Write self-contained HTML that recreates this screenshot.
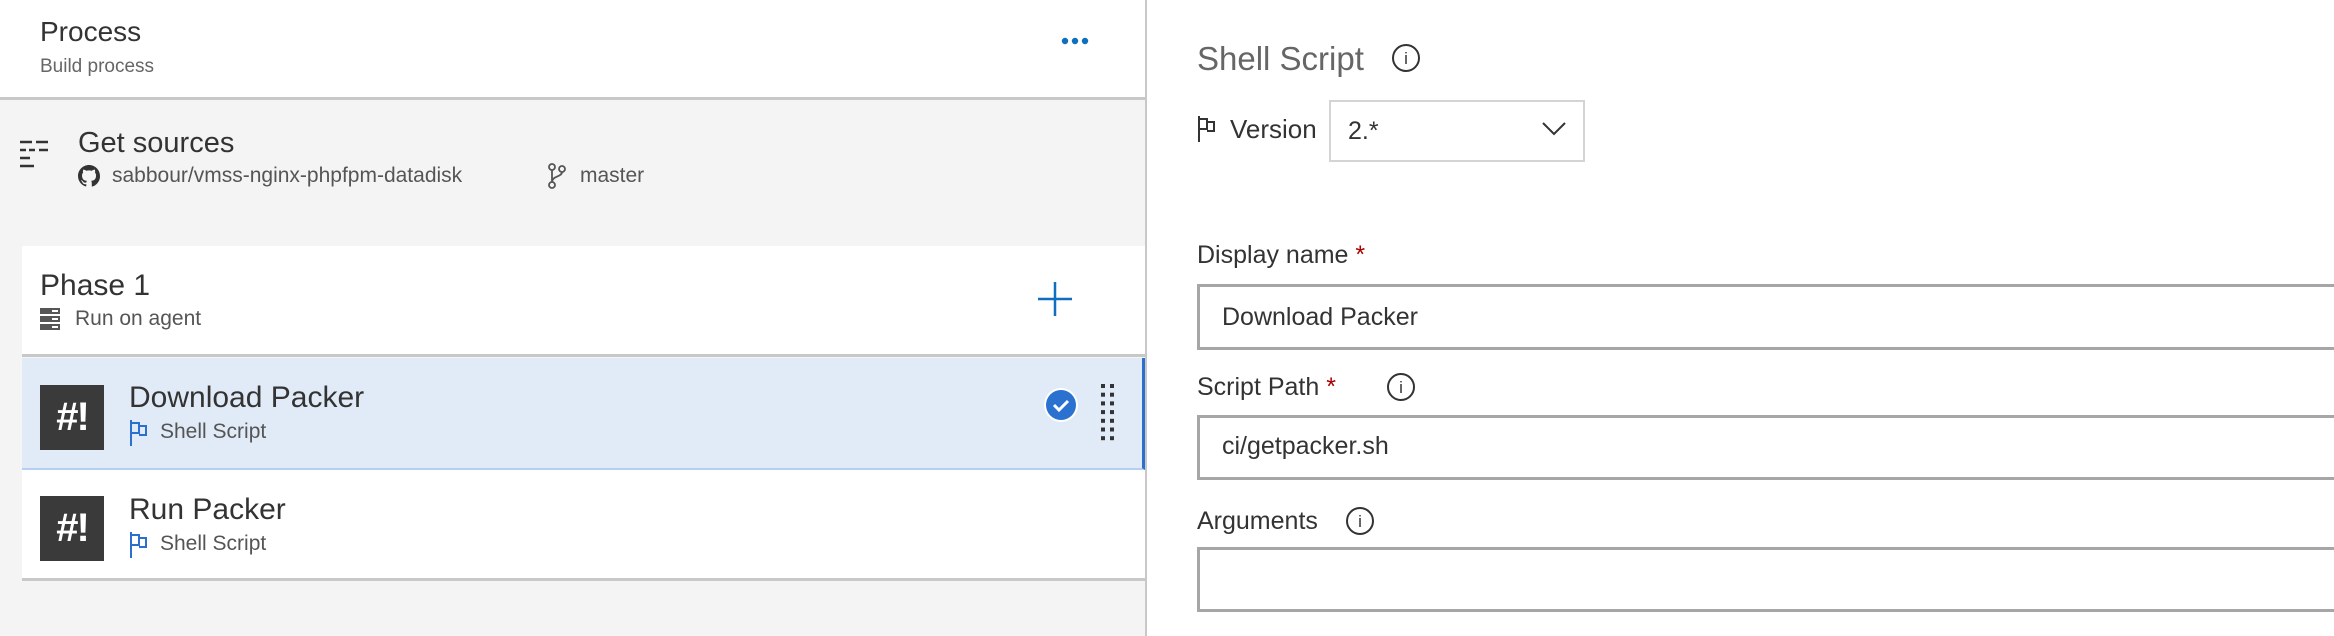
<!DOCTYPE html>
<html><head><meta charset="utf-8"><style>
*{margin:0;padding:0;box-sizing:border-box}
body{width:2334px;height:636px;overflow:hidden;font-family:"Liberation Sans",sans-serif;background:#fff;position:relative;color:#333}
.a{position:absolute;white-space:nowrap}
.left{position:absolute;left:0;top:0;width:1145px;height:636px;background:#f4f4f4}
.hdr{position:absolute;left:0;top:0;width:1145px;height:100px;background:#fff;border-bottom:3px solid #c8c8c8}
.div{position:absolute;left:1145px;top:0;width:2px;height:636px;background:#c8c8c8}
.sh{position:absolute;width:64px;height:65px;background:#3a3a3a;color:#fff;font:bold 40px "Liberation Sans",sans-serif;text-align:center;line-height:65px;letter-spacing:-2px}
.inp{position:absolute;left:1197px;width:1150px;border:3px solid #a6a6a6;background:#fff}
.lbl{font-size:25px;color:#333}
.req{color:#a80000}
.info{position:absolute;width:28px;height:28px;border:2px solid #333;border-radius:50%;font:17px "Liberation Sans",sans-serif;text-align:center;line-height:25px;color:#333}
</style></head><body>
<div class="left"></div>
<div class="hdr"></div>
<div class="div"></div>
<div class="a" style="left:40px;top:16px;font-size:28px">Process</div>
<div class="a" style="left:40px;top:56px;font-size:19px;color:#666">Build process</div>
<svg class="a" style="left:1061px;top:36px" width="30" height="10"><circle cx="4" cy="5" r="3.2" fill="#106ebe"/><circle cx="14" cy="5" r="3.2" fill="#106ebe"/><circle cx="24" cy="5" r="3.2" fill="#106ebe"/></svg>

<svg class="a" style="left:19px;top:138px" width="32" height="30" stroke="#333" stroke-width="2.5"><path d="M1 4h12M17 4h12M1 12h6M10 12h6M20 12h9M1 20h10M1 28h14"/></svg>
<div class="a" style="left:78px;top:127px;font-size:29px">Get sources</div>
<svg class="a" style="left:78px;top:165px" width="22" height="22" viewBox="0 0 16 16"><path fill="#333" d="M8 0C3.58 0 0 3.58 0 8c0 3.54 2.29 6.53 5.47 7.59.4.07.55-.17.55-.38v-1.33c-2.23.48-2.7-1.07-2.7-1.07-.36-.92-.89-1.17-.89-1.17-.73-.5.06-.49.06-.49.8.06 1.23.83 1.23.83.72 1.23 1.88.87 2.34.67.07-.52.28-.87.51-1.07-1.78-.2-3.64-.89-3.64-3.95 0-.87.31-1.59.82-2.15-.08-.2-.36-1.02.08-2.12 0 0 .67-.21 2.2.82a7.6 7.6 0 0 1 4 0c1.53-1.04 2.2-.82 2.2-.82.44 1.1.16 1.92.08 2.12.51.56.82 1.27.82 2.15 0 3.07-1.87 3.75-3.65 3.95.29.25.54.73.54 1.48v2.2c0 .21.15.46.55.38A8 8 0 0 0 16 8c0-4.42-3.58-8-8-8z"/></svg>
<div class="a" style="left:112px;top:164px;font-size:21px;color:#555">sabbour/vmss-nginx-phpfpm-datadisk</div>
<svg class="a" style="left:547px;top:163px" width="20" height="26" stroke="#555" stroke-width="1.8" fill="none"><circle cx="5" cy="4" r="3"/><circle cx="5" cy="22" r="3"/><circle cx="15" cy="6" r="3"/><path d="M5 7v12M15 9c0 5-10 4-10 10"/></svg>
<div class="a" style="left:580px;top:164px;font-size:21px;color:#555">master</div>

<div class="a" style="left:22px;top:246px;width:1123px;height:111px;background:#fff;border-bottom:3px solid #c8c8c8"></div>
<div class="a" style="left:40px;top:269px;font-size:30px">Phase 1</div>
<svg class="a" style="left:40px;top:308px" width="20" height="22"><rect x="0" y="0" width="20" height="6" fill="#555"/><rect x="0" y="8" width="20" height="6" fill="#555"/><rect x="0" y="16" width="20" height="6" fill="#555"/><rect x="12" y="2" width="6" height="2" fill="#fff"/><rect x="12" y="10" width="6" height="2" fill="#fff"/><rect x="12" y="18" width="6" height="2" fill="#fff"/></svg>
<div class="a" style="left:75px;top:307px;font-size:21px;color:#555">Run on agent</div>
<svg class="a" style="left:1038px;top:282px" width="34" height="34" stroke="#106ebe" stroke-width="2.5"><path d="M17 0v34M0 17h34"/></svg>

<div class="a" style="left:22px;top:358px;width:1123px;height:112px;background:#e1ebf7;border-bottom:2px solid #b5cfee;border-right:3px solid #2b6fcf"></div>
<div class="sh" style="left:40px;top:385px">#!</div>
<div class="a" style="left:129px;top:381px;font-size:30px">Download Packer</div>
<svg class="a" style="left:129px;top:420px" width="20" height="26" stroke="#2b6fcf" stroke-width="2" fill="none"><path d="M2 0v26M2 3h8v10H2M10 6h7v9h-7"/></svg>
<div class="a" style="left:160px;top:420px;font-size:21px;color:#555">Shell Script</div>
<svg class="a" style="left:1043px;top:387px" width="36" height="36"><circle cx="18" cy="18" r="17" fill="#fff"/><circle cx="18" cy="18" r="15" fill="#2b72d0"/><path d="M11 18l5 5 9-9" stroke="#fff" stroke-width="3" fill="none"/></svg>
<svg class="a" style="left:1101px;top:384px" width="14" height="58" fill="#333"><g id="r"><rect x="0" y="0" width="4" height="4"/><rect x="9" y="0" width="4" height="4"/></g><use href="#r" y="8.7"/><use href="#r" y="17.4"/><use href="#r" y="26.1"/><use href="#r" y="34.8"/><use href="#r" y="43.5"/><use href="#r" y="52.2"/></svg>

<div class="a" style="left:22px;top:470px;width:1123px;height:111px;background:#fff;border-bottom:3px solid #c8c8c8"></div>
<div class="sh" style="left:40px;top:496px">#!</div>
<div class="a" style="left:129px;top:493px;font-size:30px">Run Packer</div>
<svg class="a" style="left:129px;top:532px" width="20" height="26" stroke="#2b6fcf" stroke-width="2" fill="none"><path d="M2 0v26M2 3h8v10H2M10 6h7v9h-7"/></svg>
<div class="a" style="left:160px;top:532px;font-size:21px;color:#555">Shell Script</div>

<div class="a" style="left:1197px;top:40px;font-size:33px;color:#666">Shell Script</div>
<div class="info" style="left:1392px;top:44px">i</div>
<svg class="a" style="left:1197px;top:116px" width="20" height="26" stroke="#333" stroke-width="2" fill="none"><path d="M2 0v26M2 3h8v10H2M10 6h7v9h-7"/></svg>
<div class="a lbl" style="left:1230px;top:114px;font-size:26px">Version</div>
<div class="a" style="left:1329px;top:100px;width:256px;height:62px;border:2px solid #d4d4d4;background:#fff"></div>
<div class="a" style="left:1348px;top:117px;font-size:25px">2.*</div>
<svg class="a" style="left:1542px;top:122px" width="24" height="14" stroke="#333" stroke-width="2" fill="none"><path d="M1 1l11 11 11-11"/></svg>

<div class="a lbl" style="left:1197px;top:241px">Display name <span class="req">*</span></div>
<div class="inp" style="top:284px;height:66px"></div>
<div class="a" style="left:1222px;top:303px;font-size:25px">Download Packer</div>
<div class="a lbl" style="left:1197px;top:373px">Script Path <span class="req">*</span></div>
<div class="info" style="left:1387px;top:373px">i</div>
<div class="inp" style="top:415px;height:65px"></div>
<div class="a" style="left:1222px;top:432px;font-size:25px">ci/getpacker.sh</div>
<div class="a lbl" style="left:1197px;top:507px">Arguments</div>
<div class="info" style="left:1346px;top:507px">i</div>
<div class="inp" style="top:547px;height:65px"></div>
</body></html>
